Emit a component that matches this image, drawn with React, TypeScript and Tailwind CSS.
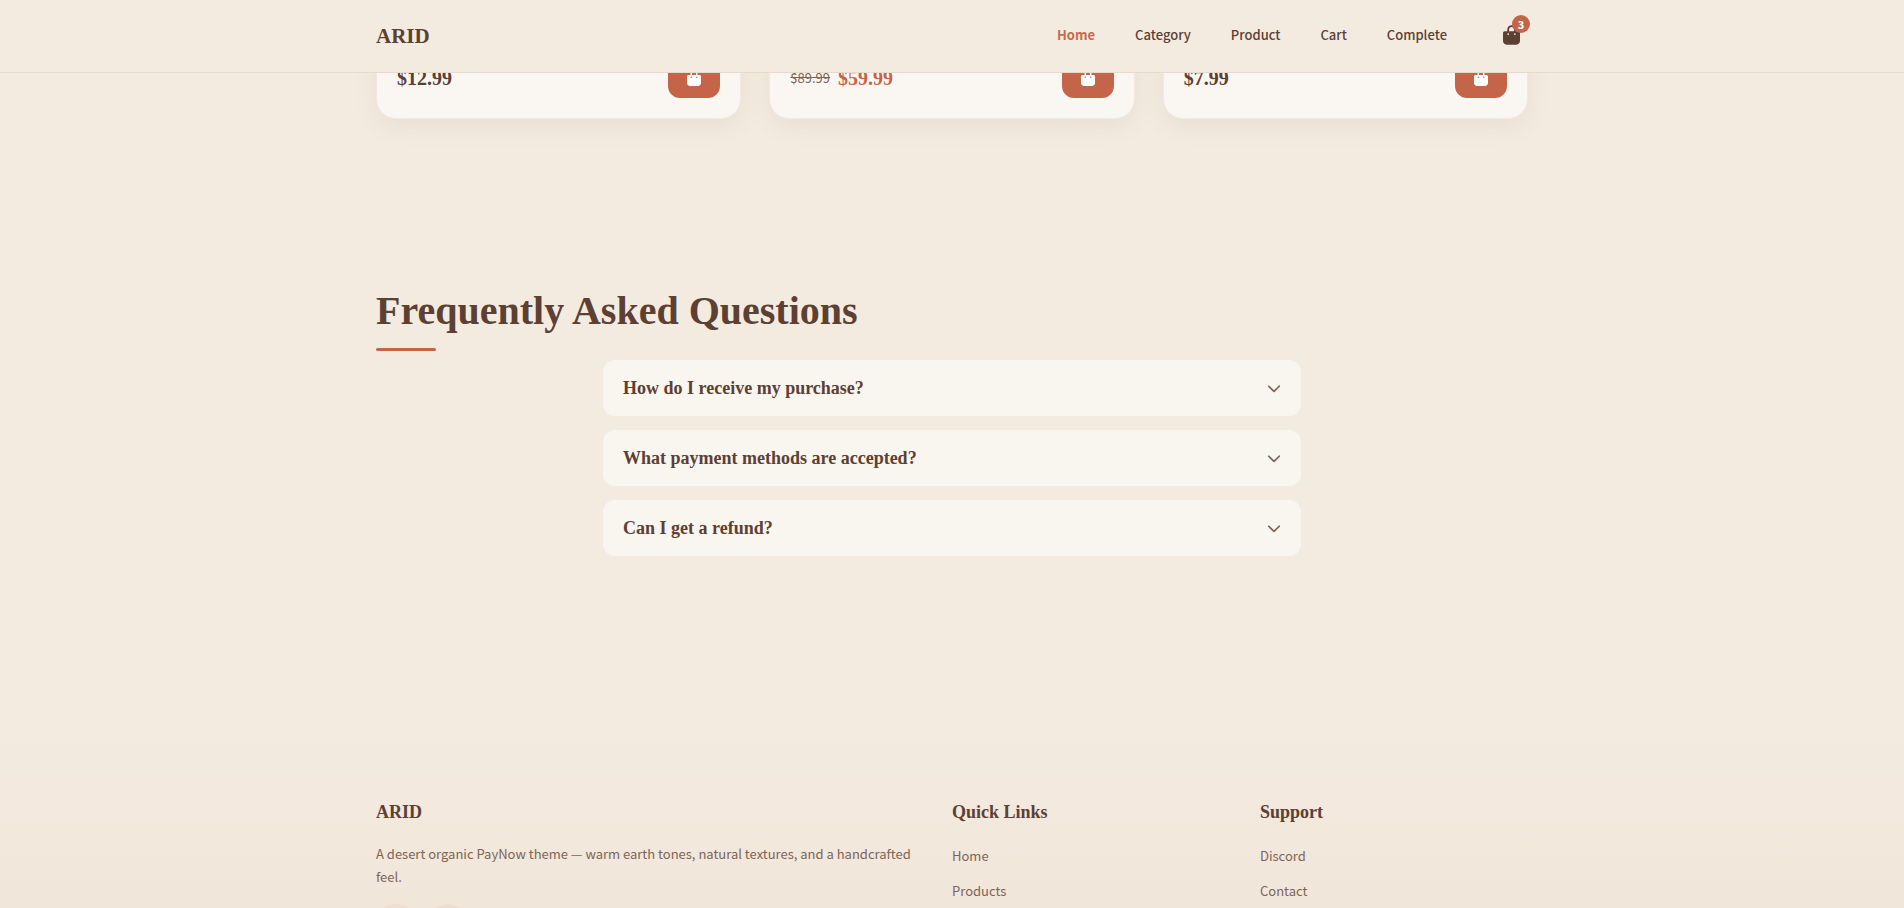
import { useState } from "react";
import { FaBagShopping, FaChevronDown, FaDiscord, FaXTwitter } from "react-icons/fa6";

interface Product {
  id: number;
  price: string;
  oldPrice?: string;
}

const products: Product[] = [
  { id: 1, price: "$12.99" },
  { id: 2, price: "$59.99", oldPrice: "$89.99" },
  { id: 3, price: "$7.99" },
];

const navLinks = ["Home", "Category", "Product", "Cart", "Complete"];

const faqs = [
  {
    question: "How do I receive my purchase?",
    answer: "Purchases are delivered automatically once the payment is confirmed.",
  },
  {
    question: "What payment methods are accepted?",
    answer: "All major cards and digital wallets are accepted.",
  },
  {
    question: "Can I get a refund?",
    answer: "Contact support and we will look into your order.",
  },
];

const footerColumns = [
  { title: "Quick Links", links: ["Home", "Products"] },
  { title: "Support", links: ["Discord", "Contact"] },
];

const Header = () => (
  <header className="fixed inset-x-0 top-0 z-10 border-b border-[#e6dacd] bg-[#f4ebe0]">
    <div className="mx-auto flex h-18 max-w-[1200px] items-center justify-between px-6">
      <a href="#" className="font-['Liberation_Serif',serif] text-[21px] leading-8 font-bold">
        ARID
      </a>
      <div className="flex items-center gap-12 pb-0.5">
        <nav className="flex gap-10 text-[13px] leading-6">
          {navLinks.map((label) => (
            <a
              key={label}
              href="#"
              className={label === "Home" ? "font-bold text-[#c9694f]" : "font-medium"}
            >
              {label}
            </a>
          ))}
        </nav>
        <button type="button" aria-label="Cart, 3 items" className="relative p-2">
          <FaBagShopping className="h-5 w-[17px]" />
          <span className="absolute -top-0.5 -right-0.5 flex size-[18px] items-center justify-center rounded-full bg-[#c4654a] text-[11px] leading-none font-bold text-white">
            3
          </span>
        </button>
      </div>
    </div>
  </header>
);

const ProductCard = ({ price, oldPrice }: Product) => (
  <article className="flex items-end justify-between rounded-[20px] border border-[#f3e8df] bg-[#faf7f2] px-5 pt-[57px] pb-5 shadow-[0_8px_24px_rgba(92,64,51,0.07)]">
    <p className="flex h-10 items-center gap-2 font-['Liberation_Serif',serif] text-xl font-bold">
      {oldPrice && (
        <s className="font-['Noto_Sans_CJK_SC',sans-serif] text-[13px] font-normal text-[#7d6556]">
          {oldPrice}
        </s>
      )}
      <span className={oldPrice ? "text-[#c4654a]" : ""}>{price}</span>
    </p>
    <button
      type="button"
      aria-label="Add to cart"
      className="flex h-10 w-13 items-center justify-center rounded-xl bg-[#c4654a] text-white"
    >
      <FaBagShopping className="h-4 w-3.5" />
    </button>
  </article>
);

const App = () => {
  const [openIndex, setOpenIndex] = useState<number | null>(null);

  return (
    <div className="min-h-screen bg-[#f4ebe0] font-['Noto_Sans_CJK_SC',sans-serif] text-[#5c4033]">
      <Header />

      <main>
        {/* Products */}
        <section className="mx-auto grid max-w-[1200px] grid-cols-3 gap-7 px-6 pb-20">
          {products.map((product) => (
            <ProductCard key={product.id} {...product} />
          ))}
        </section>

        {/* FAQ */}
        <section className="mx-auto max-w-[1200px] px-6 py-20">
          <h2 className="pt-1 pb-[9px] font-['Liberation_Serif',serif] text-[40px] leading-14 font-bold">
            Frequently Asked Questions
          </h2>
          <div className="h-[3px] w-15 rounded-full bg-[#c4654a]" />
          <div className="mx-auto mt-[9px] flex max-w-[698px] flex-col gap-3.5">
            {faqs.map((faq, i) => (
              <div key={faq.question} className="rounded-xl bg-[#f9f5ef]">
                <button
                  type="button"
                  aria-expanded={openIndex === i}
                  onClick={() => setOpenIndex(openIndex === i ? null : i)}
                  className="flex h-14 w-full items-center justify-between px-5 text-left"
                >
                  <span className="font-['Liberation_Serif',serif] text-lg font-bold">
                    {faq.question}
                  </span>
                  <FaChevronDown className="h-4 w-3.5 text-[#7d6556]" />
                </button>
                {openIndex === i && <p className="px-5 pb-5 text-sm text-[#7d6556]">{faq.answer}</p>}
              </div>
            ))}
          </div>
        </section>
      </main>

      {/* Footer */}
      <footer className="mt-20 bg-linear-to-b from-[#f4ebe0] to-[#f0e4d8] pt-20 pb-10">
        <div className="mx-auto grid max-w-[1200px] grid-cols-[2fr_1fr_1fr] gap-10 px-6">
          <div>
            <h3 className="font-['Liberation_Serif',serif] text-lg leading-8 font-bold">ARID</h3>
            <p className="mt-3.5 text-[13px] leading-[23px] text-[#7d6556]">
              A desert organic PayNow theme — warm earth tones, natural textures, and a handcrafted feel.
            </p>
            <div className="mt-4 flex gap-3">
              <a href="#" aria-label="Discord" className="flex size-10 items-center justify-center rounded-full bg-[#efdfd3]">
                <FaDiscord />
              </a>
              <a href="#" aria-label="X" className="flex size-10 items-center justify-center rounded-full bg-[#efdfd3]">
                <FaXTwitter />
              </a>
            </div>
          </div>
          {footerColumns.map((column) => (
            <div key={column.title}>
              <h3 className="font-['Liberation_Serif',serif] text-lg leading-8 font-bold">{column.title}</h3>
              <ul className="mt-4 flex flex-col gap-[11px] text-[13px] leading-6 text-[#7d6556]">
                {column.links.map((link) => (
                  <li key={link}>
                    <a href="#">{link}</a>
                  </li>
                ))}
              </ul>
            </div>
          ))}
        </div>
      </footer>
    </div>
  );
};

export default App;
